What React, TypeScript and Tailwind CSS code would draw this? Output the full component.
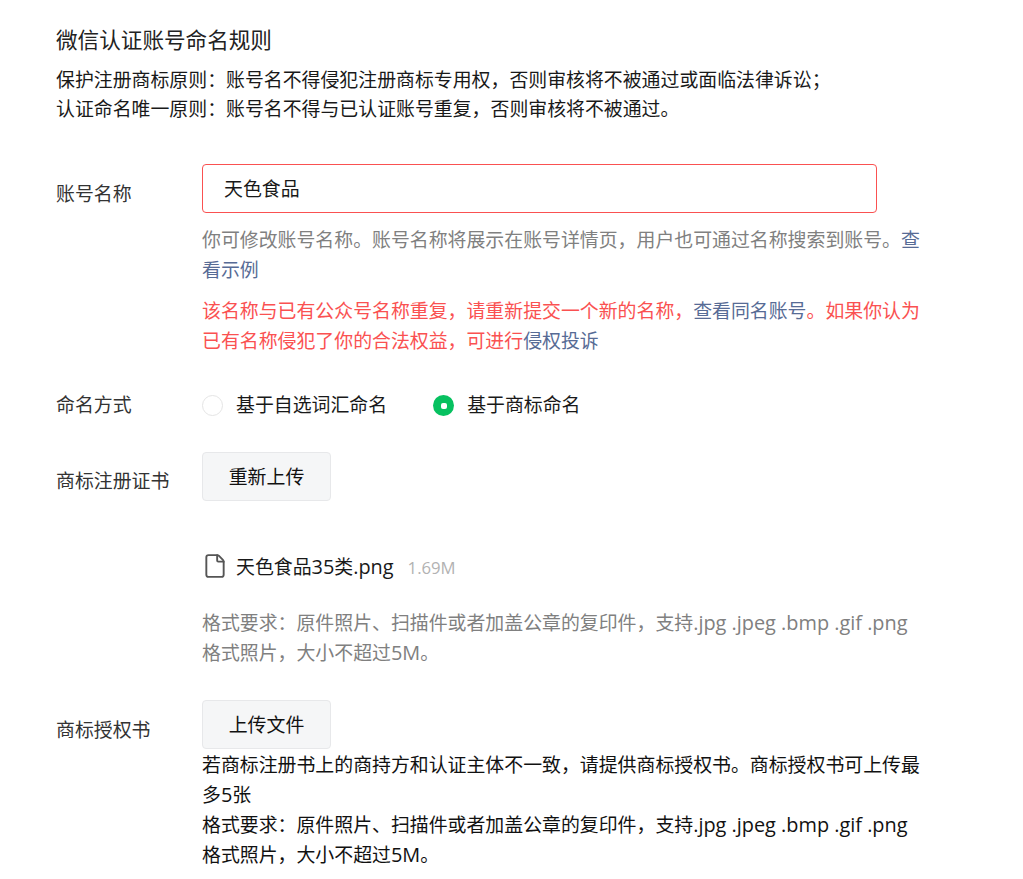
import { File } from "lucide-react";

const fontStack = "font-['Open_Sans','Noto_Sans_CJK_SC',sans-serif]";

// full-width punctuation, kept as escapes so it survives editing
const C = "\uFF0C";
const K = "\uFF1A";
const S = "\uFF1B";

function Latin(props: { children: string }) {
  return <span className="text-[19.9px] leading-none">{props.children}</span>;
}

function FormatHint() {
  return (
    <>
      {`格式要求${K}原件照片、扫描件或者加盖公章的复印件${C}支持`}
      <Latin>.jpg .jpeg .bmp .gif .png</Latin> {`格式照片${C}大小不超过`}
      <Latin>5M</Latin>。
    </>
  );
}

function UploadButton(props: { label: string }) {
  return (
    <button
      type="button"
      className="h-[49px] w-[129px] rounded-[4px] border border-[#e7e8ea] bg-[#f5f6f7] pt-[2px] text-[18.9px] text-[#111]"
    >
      {props.label}
    </button>
  );
}

function Radio(props: { label: string; checked?: boolean }) {
  return (
    <label className="flex items-center gap-[13px]">
      {props.checked ? (
        <span className="grid h-[21px] w-[21px] place-items-center rounded-full bg-[#07c160]">
          <span className="h-[6px] w-[6px] rounded-[2px] bg-white" />
        </span>
      ) : (
        <span className="h-[21px] w-[21px] rounded-full border border-[#e5e5e5] bg-white" />
      )}
      <span>{props.label}</span>
    </label>
  );
}

export default function App() {
  return (
    <div className={`${fontStack} h-[879px] w-[1023px] overflow-hidden bg-white pl-[56px] pt-[25px] text-[18.9px] leading-[29px] text-[#191919]`}>
      <h1 className="text-[21.6px] leading-[30px] font-normal text-[#222]">微信认证账号命名规则</h1>
      <p className="mt-[11px]">{`保护注册商标原则${K}账号名不得侵犯注册商标专用权${C}否则审核将不被通过或面临法律诉讼${S}`}</p>
      <p>{`认证命名唯一原则${K}账号名不得与已认证账号重复${C}否则审核将不被通过。`}</p>

      <div className="mt-[40px] flex">
        <div className="w-[146px] shrink-0 pt-[16px] text-[#333]">账号名称</div>
        <div className="w-[718px]">
          <div className="flex h-[49px] w-[675px] items-center rounded-[4px] border border-[#fa5151] pl-[21px] pt-[2px]">天色食品</div>
          <p className="mt-[12px] leading-[30px] text-[#808080]">
            {`你可修改账号名称。账号名称将展示在账号详情页${C}用户也可通过名称搜索到账号。`}
            <span className="text-[#576b95]">查看示例</span>
          </p>
          <p className="mt-[11px] leading-[30px] text-[#fa5151]">
            {`该名称与已有公众号名称重复${C}请重新提交一个新的名称${C}`}
            <span className="text-[#576b95]">查看同名账号</span>
            {`。如果你认为已有名称侵犯了你的合法权益${C}可进行`}
            <span className="text-[#576b95]">侵权投诉</span>
          </p>
        </div>
      </div>

      <div className="mt-[35px] flex items-center">
        <div className="w-[146px] shrink-0 text-[#333]">命名方式</div>
        <div className="flex gap-[46px]">
          <Radio label="基于自选词汇命名" />
          <Radio label="基于商标命名" checked />
        </div>
      </div>

      <div className="mt-[32px] flex">
        <div className="w-[146px] shrink-0 pt-[15px] text-[#333]">商标注册证书</div>
        <div className="w-[718px]">
          <UploadButton label="重新上传" />
          <div className="mt-[50px] flex items-center">
            <File size={26} strokeWidth={1.75} className="-translate-y-px text-[#555]" />
            <span className="ml-[8px] pt-[2px]">
              天色食品<Latin>35</Latin>类<Latin>.png</Latin>
            </span>
            <span className="ml-[14px] pt-[2px] text-[16.7px] text-[#b2b2b2]">1.69M</span>
          </div>
          <p className="mt-[26px] leading-[30px] text-[#808080]">
            <FormatHint />
          </p>
        </div>
      </div>

      <div className="mt-[32px] flex">
        <div className="w-[146px] shrink-0 pt-[16px] text-[#333]">商标授权书</div>
        <div className="w-[718px]">
          <UploadButton label="上传文件" />
          <div className="mt-[1px] leading-[30px] text-[#111]">
            <p>
              {`若商标注册书上的商持方和认证主体不一致${C}请提供商标授权书。商标授权书可上传最多`}
              <Latin>5</Latin>张
            </p>
            <p>
              <FormatHint />
            </p>
          </div>
        </div>
      </div>
    </div>
  );
}
